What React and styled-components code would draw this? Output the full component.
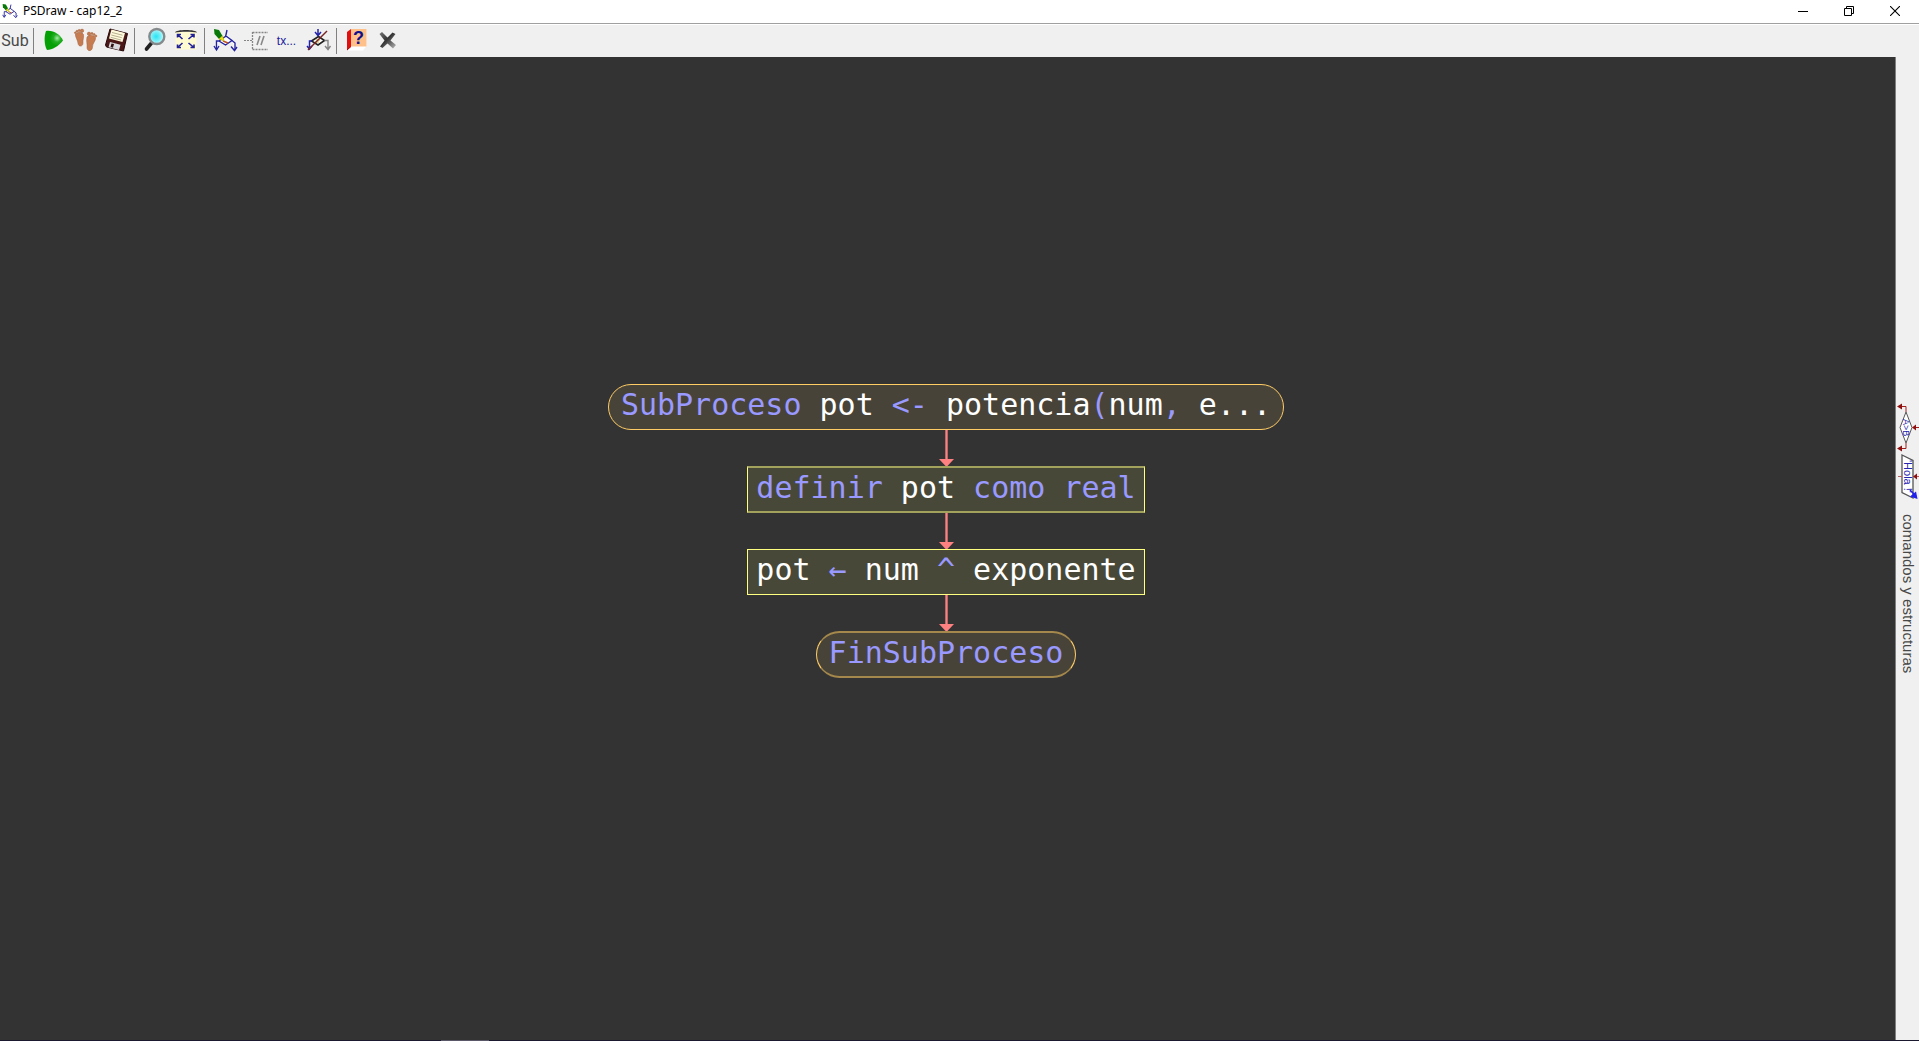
import React from "react";
import styled, { createGlobalStyle } from "styled-components";

const Global = createGlobalStyle`
  * { box-sizing: border-box; }
  html, body, #root { height: 100%; margin: 0; }
  body { overflow: hidden; font-family: "Noto Sans", "Open Sans", sans-serif; }
`;

const Window = styled.div`
  display: flex;
  flex-direction: column;
  height: 100vh;
  background: #f0f0f0;
`;

const TitleBar = styled.header`
  display: flex;
  align-items: center;
  flex: none;
  height: 24px;
  padding: 0 1px 2px 2px;
  background: #fff;
  border-bottom: 1px solid #a0a0a0;
`;

const Title = styled.h1`
  flex: 1;
  margin: 0 0 0 5px;
  font-size: 12px;
  line-height: 20px;
  font-weight: 400;
  color: #000;
`;

const WindowButton = styled.button`
  display: flex;
  align-items: center;
  justify-content: center;
  width: 46px;
  height: 20px;
  padding: 0;
  border: 0;
  background: transparent;
`;

const Toolbar = styled.nav`
  display: flex;
  align-items: center;
  flex: none;
  height: 33px;
  border-top: 1px solid #fff;
`;

const ToolButton = styled.button`
  display: flex;
  align-items: center;
  justify-content: center;
  width: ${(p) => (p.$first ? "30px" : "31px")};
  height: 32px;
  padding: 0;
  border: 0;
  background: transparent;
  white-space: nowrap;
`;

const SubLabel = styled.span`
  font-family: Roboto, "Liberation Sans", sans-serif;
  font-size: 16px;
  line-height: 20px;
  color: #484848;
`;

const TextLabel = styled.span`
  font-size: 12px;
  line-height: 16px;
  color: #20209a;
`;

const Separator = styled.span`
  width: 1px;
  height: 26px;
  margin: 0 4px 0 3px;
  background: #808080;
`;

const Workspace = styled.div`
  display: flex;
  flex: 1;
  min-height: 0;
`;

const Canvas = styled.main`
  display: flex;
  flex: 1;
  flex-direction: column;
  align-items: center;
  justify-content: center;
  padding: 0 3px 35px 0;
  background: #333;
  border-right: 1px solid #808080;
`;

const Step = styled.div`
  flex: none;
  padding: 0 ${(p) => (p.$round ? "12px" : "8px")} ${(p) => (p.$soft ? "3px" : "4px")};
  border: 1px solid ${(p) => (p.$round ? "#ffcc66" : "#ffff80")};
  border-block: ${(p) =>
    p.$soft
      ? `2px solid ${p.$round ? "#a5884c" : "#a2a25d"}`
      : `1px solid ${p.$round ? "#ffcc66" : "#ffff80"}`};
  border-radius: ${(p) => (p.$round ? "24px" : "0")};
  background: ${(p) => (p.$round ? "#484338" : "#484839")};
  font-family: "DejaVu Sans Mono", "Liberation Mono", monospace;
  font-size: 30px;
  line-height: 40px;
  white-space: pre;
  color: #fff;
`;

const Keyword = styled.span`
  color: #9999ff;
`;

const Connector = styled.svg`
  display: block;
  flex: none;
  width: 15px;
  height: 36px;
  overflow: visible;
`;

const SidePanel = styled.aside`
  display: flex;
  flex: none;
  flex-direction: column;
  align-items: center;
  justify-content: center;
  width: 23px;
  padding-bottom: 20px;
`;

const PanelButton = styled.button`
  display: flex;
  flex-direction: column;
  align-items: center;
  gap: 2px;
  width: 23px;
  padding: 0;
  border: 0;
  background: transparent;
`;

const PanelLabel = styled.span`
  margin-top: 12px;
  writing-mode: vertical-rl;
  font-family: "Liberation Sans", Arial, sans-serif;
  font-size: 15px;
  line-height: 22px;
  color: #484848;
`;

const BottomEdge = styled.footer`
  flex: none;
  height: 1px;
  padding-left: 23%;
  background: #1b1930;
`;

const TaskMark = styled.div`
  width: 48px;
  height: 1px;
  background: #5a5868;
`;

const BookGlyph = styled.text`
  font-family: "Liberation Sans", Arial, sans-serif;
  font-size: 18px;
  font-weight: 700;
  fill: #10108c;
`;

const Icon = ({ children }) => (
  <svg width="31" height="32" viewBox="0 0 31 32" aria-hidden="true">
    {children}
  </svg>
);

const FlowShape = () => (
  <>
    <path d="M18 5 L16.5 12 M10 16 L17 11 L23 15.500 L16.500 20 Z M10 16 H7.500 V24 M23 15.500 L26 18 V24" fill="#fff" stroke="#2424a0" strokeWidth="1.400" />
    <path d="M5 21 L7.500 25 L10 21 M22 21.500 L25.500 25.500 L28 22" fill="none" stroke="#2424a0" strokeWidth="1.400" />
    <path d="M14 16 L19 18" stroke="#c05020" strokeWidth="1.500" />
    <path d="M5 4 L10 5 L13.500 11 L10 14 L5.500 9 Z" fill="#087808" />
    <path d="M10 14 L13.500 11 L15 16 Z" fill="#f4e800" stroke="#b0a800" strokeWidth=".6" />
  </>
);

const AppIcon = () => (
  <svg width="16" height="16" viewBox="4 3 25 24" aria-hidden="true">
    <FlowShape />
  </svg>
);

const PlayIcon = () => (
  <Icon>
    <defs>
      <radialGradient id="play" cx=".68" cy=".38" r=".4">
        <stop offset="0" stopColor="#a4eca4" />
        <stop offset=".5" stopColor="#24b024" />
        <stop offset="1" stopColor="#05a005" />
      </radialGradient>
    </defs>
    <path d="M8 6 C15 5 22 9 25 15.500 C21 21 14 25 9 25 C6 20 6 11 8 6 Z" fill="url(#play)" />
  </Icon>
);

const FeetIcon = () => (
  <Icon>
    <g fill="#c67c50" stroke="#a05c38" strokeWidth=".5">
      <path d="M6.500 9 C9 6.500 13 7 14.500 9.500 C15 13 13.500 15 14 18 C14 22 9.500 22 9 18.500 C9 15 6 12.500 6.500 9 Z" />
      <path d="M18 12 C20 9.500 25 10 26.500 12.500 C27 16 23.500 18 23.500 22 C23.500 26.500 18 27 18 22.500 C18.500 19 17 16 18 12 Z" />
      <circle cx="13" cy="5.800" r="1.700" />
      <circle cx="10.200" cy="5.500" r="1.100" />
      <circle cx="8" cy="6.200" r="1" />
      <circle cx="6.300" cy="7.700" r=".9" />
      <circle cx="20" cy="8.800" r="1.700" />
      <circle cx="23" cy="8.500" r="1.100" />
      <circle cx="25.200" cy="9.500" r="1" />
      <circle cx="27" cy="11" r=".9" />
    </g>
  </Icon>
);

const SaveIcon = () => (
  <Icon>
    <path d="M10 4 L27.500 8.500 L23.500 26 L6.500 22 L5.500 20 Z" fill="#4c1717" stroke="#260808" />
    <path d="M11.500 4.500 L25 8 L22.500 17 L9 13.500 Z" fill="#fffadc" />
    <path d="M12 7.500 L22.500 10.200 M11.300 10 L21.800 12.700 M10.700 12.300 L21 15" stroke="#b8b190" />
    <path d="M10 17 L20.500 19.700 L19 25 L8.500 22.300 Z" fill="#d8d8dc" />
    <path d="M11.500 18.500 L14 19.100 L13 22.700 L10.500 22 Z" fill="#301010" />
  </Icon>
);

const ZoomIcon = () => (
  <Icon>
    <defs>
      <radialGradient id="lens" cx=".45" cy=".5" r=".55">
        <stop offset="0" stopColor="#28e4f4" />
        <stop offset=".6" stopColor="#80f0f8" />
        <stop offset="1" stopColor="#d8ffff" />
      </radialGradient>
    </defs>
    <path d="M12.500 18 L7.500 24" stroke="#222" strokeWidth="3.600" strokeLinecap="round" />
    <circle cx="17.800" cy="11.500" r="7.500" fill="url(#lens)" stroke="#858a8c" strokeWidth="2.400" />
  </Icon>
);

const FitIcon = () => (
  <Icon>
    <path d="M5.500 7 H26.500 V24.500 H5.500 Z" fill="#fffbd0" />
    <path d="M5 7.500 C5 4 27 4 27 7.500 C22 6.500 10 6.500 5 7.500 Z" fill="#333" />
    <path d="M12.500 14 L7.500 9.500 M7.500 12.500 V9.500 H11 M18.500 14 L24 9.500 M20.500 9.500 H24 V12.500 M12.500 18 L7.500 22.500 M7.500 19.500 V22.500 H11 M18.500 18 L24 22.500 M24 19.500 V22.500 H20.500" fill="none" stroke="#20209c" strokeWidth="1.600" />
  </Icon>
);

const CommentIcon = () => (
  <Icon>
    <path d="M12.500 7 V24.500 M12.500 7.500 H28 M12.500 24.500 H28" stroke="#858585" fill="none" strokeWidth="1.300" strokeDasharray="2 1" />
    <path d="M4 15.500 H12" stroke="#858585" strokeDasharray="2 1" />
    <path d="M20 11 L17 20 M24 11 L21 20" stroke="#888" strokeWidth="1.600" />
  </Icon>
);

const EditIcon = () => (
  <Icon>
    <path d="M9.500 16 L16.500 11.500 L22.500 15.500 L16 20 Z" fill="#fff" stroke="#222" strokeWidth="1.600" />
    <path d="M16 4 V10 M13 7 L16 10.500 L19 7 M10 16 H7.500 V24 M5 21 L7.500 24 L10 21" fill="none" stroke="#2424a8" strokeWidth="1.500" />
    <path d="M22.500 15.500 H26 V24 M23 21 L26 24.500 L28.500 21" fill="none" stroke="#858585" strokeWidth="1.400" />
    <path d="M13 17 H17 M14 15 H18" stroke="#c6b040" />
    <path d="M6 25 L25 6" stroke="#7a2424" strokeWidth="1.500" />
  </Icon>
);

const HelpIcon = () => (
  <Icon>
    <path d="M6 7 L10 4 V22 L6 25.500 Z" fill="#e01010" />
    <path d="M10 4 H25.500 V21 L22 25.500 H6 L10 21.500 Z" fill="#fff" />
    <path d="M10 4 H25.500 V21.500 H10 Z" fill="#ffc08a" />
    <path d="M6 25 L10 21.500" stroke="#a80808" />
    <BookGlyph x="12" y="19">?</BookGlyph>
  </Icon>
);

const CloseIcon = () => (
  <Icon>
    <defs>
      <linearGradient id="cross" x1="0" y1="0" x2="1" y2="1">
        <stop offset="0" stopColor="#777" />
        <stop offset=".45" stopColor="#333" />
        <stop offset="1" stopColor="#bbb" />
      </linearGradient>
    </defs>
    <path d="M7.500 9 L10 7 L15.500 12.500 L20.500 7.500 L23.500 9 L18.500 15.500 L24 20 L21 23.500 L15.500 18.500 L10.500 23 L8 21.500 L12.500 15.500 Z" fill="url(#cross)" />
  </Icon>
);

const Arrow = () => (
  <Connector viewBox="0 0 15 36" aria-hidden="true">
    <path d="M7.500 0 V30" stroke="#bb6868" strokeWidth="3" />
    <path d="M7.500 0 V30" stroke="#ff8080" strokeWidth="1" />
    <path d="M0 29 H15 L7.500 37 Z" fill="#ff8080" />
  </Connector>
);

const ConditionIcon = () => (
  <svg width="23" height="49" viewBox="0 0 23 49" aria-hidden="true">
    <path d="M10 9 L16 24.500 L10 40 L4 24.500 Z" fill="#fff" stroke="#555" />
    <path d="M10 9 V3.500 H4 M10 40 V45.500 H4 M23 24.500 H18" fill="none" stroke="#a02020" />
    <path d="M1 3.500 L6 .5 V6.500 Z M1 45.500 L6 42.500 V48.500 Z M16 24.500 L20 21.500 V27.500 Z" fill="#901010" />
    <text x="-8.500" y="0" transform="translate(7 24.500) rotate(90)" fontFamily="Liberation Sans, sans-serif" fontSize="9" fill="#2424b0">A&gt;B</text>
  </svg>
);

const OutputIcon = () => (
  <svg width="23" height="46" viewBox="0 0 23 46" aria-hidden="true">
    <path d="M6 1 L17 6.500 V44 L6 38.500 Z" fill="#fff" stroke="#555" strokeWidth="1.300" />
    <path d="M2 22.500 H6 M23 22.500 H18" stroke="#b06060" />
    <path d="M17 22.500 L21 19.500 V25.500 Z" fill="#901010" />
    <text x="6" y="0" transform="translate(8 0) rotate(90)" fontFamily="Liberation Sans, sans-serif" fontSize="11" fill="#2424b0">'Hola !'</text>
    <path d="M14 36 L20 42" stroke="#2020f0" strokeWidth="1.500" />
    <path d="M21.500 45 L14 42.500 L20 37.500 Z" fill="#2020f0" />
  </svg>
);

export default function App() {
  return (
    <Window>
      <Global />
      <TitleBar>
        <AppIcon />
        <Title>PSDraw - cap12_2</Title>
        <WindowButton aria-label="Minimizar">
          <svg width="10" height="10" viewBox="0 0 10 10"><path d="M0 5.500 H10" stroke="#000" /></svg>
        </WindowButton>
        <WindowButton aria-label="Restaurar">
          <svg width="10" height="10" viewBox="0 0 10 10"><path d="M.5 2.500 H7.500 V9.500 H.5 Z M2.500 2.500 V.5 H9.500 V7.500 H7.500" fill="none" stroke="#000" /></svg>
        </WindowButton>
        <WindowButton aria-label="Cerrar">
          <svg width="10" height="10" viewBox="0 0 10 10"><path d="M0 0 L10 10 M10 0 L0 10" stroke="#000" strokeWidth="1.100" /></svg>
        </WindowButton>
      </TitleBar>
      <Toolbar>
        <ToolButton $first><SubLabel>Sub</SubLabel></ToolButton>
        <Separator />
        <ToolButton aria-label="Ejecutar"><PlayIcon /></ToolButton>
        <ToolButton aria-label="Paso a paso"><FeetIcon /></ToolButton>
        <ToolButton aria-label="Guardar"><SaveIcon /></ToolButton>
        <Separator />
        <ToolButton aria-label="Zoom"><ZoomIcon /></ToolButton>
        <ToolButton aria-label="Ajustar"><FitIcon /></ToolButton>
        <Separator />
        <ToolButton aria-label="Estilo"><Icon><FlowShape /></Icon></ToolButton>
        <ToolButton aria-label="Comentarios"><CommentIcon /></ToolButton>
        <ToolButton><TextLabel>tx...</TextLabel></ToolButton>
        <ToolButton aria-label="Editar"><EditIcon /></ToolButton>
        <Separator />
        <ToolButton aria-label="Ayuda"><HelpIcon /></ToolButton>
        <ToolButton aria-label="Salir"><CloseIcon /></ToolButton>
      </Toolbar>
      <Workspace>
        <Canvas>
          <Step $round>
            <Keyword>SubProceso</Keyword> pot <Keyword>{"<-"}</Keyword> potencia<Keyword>(</Keyword>num<Keyword>,</Keyword> e...
          </Step>
          <Arrow />
          <Step $soft>
            <Keyword>definir</Keyword> pot <Keyword>como real</Keyword>
          </Step>
          <Arrow />
          <Step>
            pot <Keyword>←</Keyword> num <Keyword>^</Keyword> exponente
          </Step>
          <Arrow />
          <Step $round $soft>
            <Keyword>FinSubProceso</Keyword>
          </Step>
        </Canvas>
        <SidePanel>
          <PanelButton>
            <ConditionIcon />
            <OutputIcon />
            <PanelLabel>comandos y estructuras</PanelLabel>
          </PanelButton>
        </SidePanel>
      </Workspace>
      <BottomEdge><TaskMark /></BottomEdge>
    </Window>
  );
}
